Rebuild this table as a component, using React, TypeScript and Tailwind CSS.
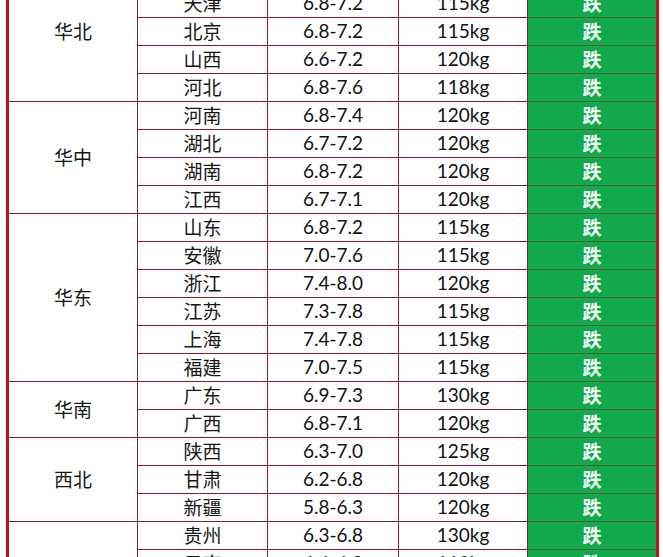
import React from "react";

type Row = [string, string, string];
type Group = { region: string; rows: Row[] };

const groups: Group[] = [
  {
    region: "华北",
    rows: [
      ["内蒙古", "6.6-7.0", "120kg"],
      ["天津", "6.8-7.2", "115kg"],
      ["北京", "6.8-7.2", "115kg"],
      ["山西", "6.6-7.2", "120kg"],
      ["河北", "6.8-7.6", "118kg"],
    ],
  },
  {
    region: "华中",
    rows: [
      ["河南", "6.8-7.4", "120kg"],
      ["湖北", "6.7-7.2", "120kg"],
      ["湖南", "6.8-7.2", "120kg"],
      ["江西", "6.7-7.1", "120kg"],
    ],
  },
  {
    region: "华东",
    rows: [
      ["山东", "6.8-7.2", "115kg"],
      ["安徽", "7.0-7.6", "115kg"],
      ["浙江", "7.4-8.0", "120kg"],
      ["江苏", "7.3-7.8", "115kg"],
      ["上海", "7.4-7.8", "115kg"],
      ["福建", "7.0-7.5", "115kg"],
    ],
  },
  {
    region: "华南",
    rows: [
      ["广东", "6.9-7.3", "130kg"],
      ["广西", "6.8-7.1", "120kg"],
    ],
  },
  {
    region: "西北",
    rows: [
      ["陕西", "6.3-7.0", "125kg"],
      ["甘肃", "6.2-6.8", "120kg"],
      ["新疆", "5.8-6.3", "120kg"],
    ],
  },
  {
    region: "西南",
    rows: [
      ["贵州", "6.3-6.8", "130kg"],
      ["云南", "6.6-6.9", "110kg"],
      ["四川", "6.6-7.0", "120kg"],
      ["重庆", "6.6-7.0", "120kg"],
    ],
  },
];

const cjk = { fontFamily: "'Noto Sans CJK SC', 'Noto Sans', sans-serif" };
const num = { fontFamily: "Lato, 'Noto Sans CJK SC', sans-serif" };

export default function App() {
  return (
    <div className="w-[663px] h-[557px] overflow-hidden bg-white">
      <div className="ml-[6px] mt-[-38px] w-[653px] border-l-[3px] border-r-[3px] border-[#b8151b]">
        {groups.map((g) => (
          <div key={g.region} className="flex">
            <div
              className="w-[129px] shrink-0 flex items-center justify-center border-r border-b border-[#8b1a2a] text-[19px] text-[#161616]"
              style={cjk}
            >
              {g.region}
            </div>
            <div className="flex flex-col">
              {g.rows.map((r) => (
                <div key={r[0]} className="flex h-[28px]">
                  <div
                    className="w-[130px] flex items-center justify-center border-r border-b border-[#8b1a2a] text-[19px] text-[#161616]"
                    style={cjk}
                  >
                    {r[0]}
                  </div>
                  <div
                    className="w-[131px] flex items-center justify-center border-r border-b border-[#8b1a2a] text-[19px] text-[#111]"
                    style={num}
                  >
                    {r[1]}
                  </div>
                  <div
                    className="w-[129px] flex items-center justify-center border-r border-b border-[#8b1a2a] text-[19px] text-[#111]"
                    style={num}
                  >
                    {r[2]}
                  </div>
                  <div
                    className="w-[128px] flex items-center justify-center border-b border-[#4f5d36] bg-[#12a84c] text-[19px] font-bold text-[#f4fff6]"
                    style={cjk}
                  >
                    跌
                  </div>
                </div>
              ))}
            </div>
          </div>
        ))}
      </div>
    </div>
  );
}
